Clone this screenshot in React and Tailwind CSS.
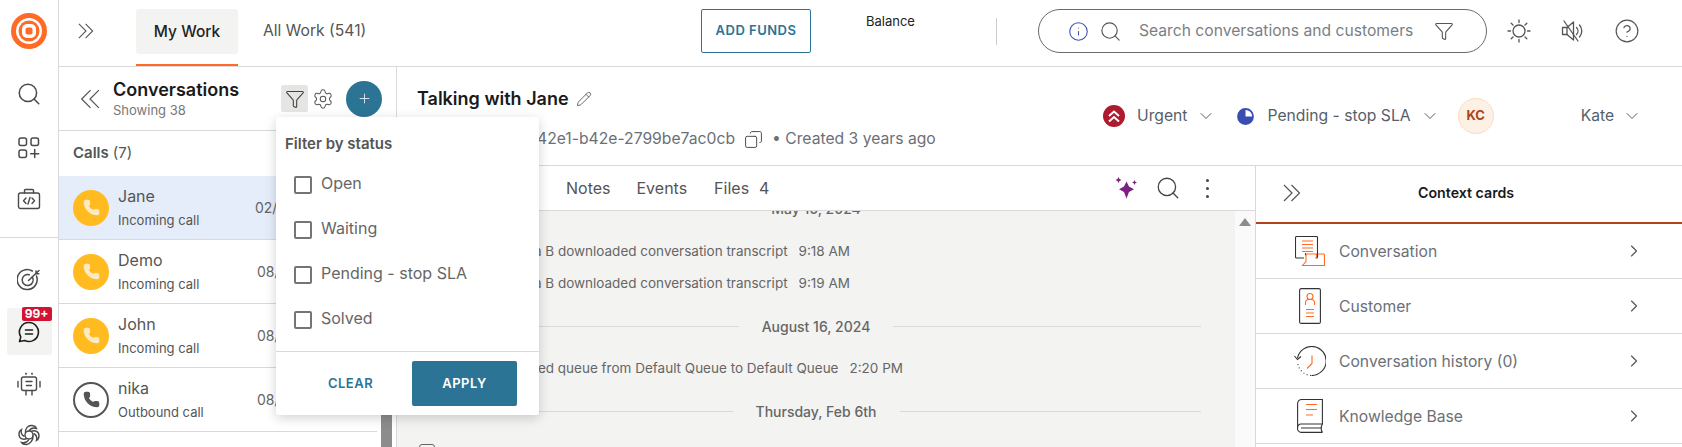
import { ChevronDown, ChevronRight, Search, Settings, Pencil, Copy, Info, CircleHelp, Phone, Funnel, Plus } from 'lucide-react';

const calls = [
    { name: 'Jane', sub: 'Incoming call', date: '02/06/2025', active: true },
    { name: 'Demo', sub: 'Incoming call', date: '08/16/2024' },
    { name: 'John', sub: 'Incoming call', date: '08/16/2024' },
    { name: 'nika', sub: 'Outbound call', date: '08/16/2024', outbound: true },
];

const statuses = ['Open', 'Waiting', 'Pending - stop SLA', 'Solved'];

function Logo() {
    return (
        <svg width="36" height="36" viewBox="0 0 36 36">
            <circle cx="18" cy="18" r="18" fill="#ff6a26" />
            <circle cx="18" cy="18" r="13" fill="#fff" />
            <circle cx="18" cy="18" r="10.5" fill="#ff6a26" />
            <rect x="11" y="11" width="14" height="14" rx="5" fill="#fff" />
            <rect x="14.5" y="14.5" width="7" height="7" rx="2" fill="#ff6a26" />
        </svg>
    );
}

function DoubleRight({ size }) {
    return (
        <svg width={size} height={size} viewBox="0 0 18 18" fill="none" stroke="#555555" strokeWidth="1.2">
            <path d="M1 1l8 8-8 8M8.5 1l8 8-8 8" />
        </svg>
    );
}

function DoubleLeft({ size }) {
    return (
        <svg width={size} height={size} viewBox="0 0 18 18" fill="none" stroke="#555555" strokeWidth="1.1">
            <path d="M9.5 1l-8 8 8 8M17 1l-8 8 8 8" />
        </svg>
    );
}

function SunIcon() {
    return (
        <svg width="24" height="24" viewBox="0 0 24 24" fill="none" stroke="#555555" strokeWidth="1.3" strokeLinecap="round">
            <circle cx="12" cy="12" r="6" />
            <path d="M12 1v2.5M12 20.5V23M1 12h2.5M20.5 12H23M4.2 4.2L6 6M18 18l1.8 1.8M4.2 19.8L6 18M18 6l1.8-1.8" />
        </svg>
    );
}

function MutedIcon() {
    return (
        <svg width="24" height="24" viewBox="0 0 24 24" fill="none" stroke="#555555" strokeWidth="1.3" strokeLinecap="round" strokeLinejoin="round">
            <path d="M1.5 8.5H6L12.5 3v18L6 15.5H1.5z" />
            <path d="M6 8.5v7M3 2l14 20" />
            <path d="M15.5 8.5a5 5 0 0 1 0 7M18.5 6a9 9 0 0 1 0 12" />
        </svg>
    );
}

function AppsIcon() {
    return (
        <svg width="22" height="22" viewBox="0 0 22 22" fill="none" stroke="#4a4a4a" strokeWidth="1.5">
            <rect x="1" y="1" width="7.5" height="7.5" rx="2" />
            <rect x="13" y="1" width="7.5" height="7.5" rx="2" />
            <rect x="1" y="13" width="7.5" height="7.5" rx="2" />
            <path d="M16.7 12.5v8M12.7 16.7h8" strokeLinecap="round" />
        </svg>
    );
}

function ToolboxIcon() {
    return (
        <svg width="24" height="22" viewBox="0 0 24 22" fill="none" stroke="#4a4a4a" strokeWidth="1.4" strokeLinecap="round" strokeLinejoin="round">
            <rect x="1.5" y="5" width="21" height="15.5" rx="2" />
            <path d="M7.5 5V2.5a1 1 0 0 1 1-1h7a1 1 0 0 1 1 1V5" />
            <path d="M9 10l-2.5 2.7L9 15.4M15 10l2.5 2.7-2.5 2.7M13 9.5l-2 6.5" />
        </svg>
    );
}

function TargetIcon() {
    return (
        <svg width="24" height="24" viewBox="0 0 24 24" fill="none" stroke="#4a4a4a" strokeWidth="1.5" strokeLinecap="round">
            <path d="M19.5 8a10 10 0 1 1-4.2-5" />
            <path d="M15.3 9a5.5 5.5 0 1 1-3-2.3" />
            <path d="M11.5 12.5L22 2.5M19 3v2.8h2.8" />
        </svg>
    );
}

function ChatIcon() {
    return (
        <svg width="22" height="22" viewBox="0 0 22 22" fill="none" stroke="#1f1f1f" strokeWidth="1.6" strokeLinecap="round" strokeLinejoin="round">
            <path d="M11 1.5a9.5 9.5 0 1 1-4.3 18L1.5 20.5l1.3-4.6A9.5 9.5 0 0 1 11 1.5z" />
            <path d="M7.5 9h7M7.5 13h7" />
        </svg>
    );
}

function BotIcon() {
    return (
        <svg width="24" height="24" viewBox="0 0 24 24" fill="none" stroke="#4a4a4a" strokeWidth="1.4" strokeLinecap="round" strokeLinejoin="round">
            <circle cx="9" cy="1.8" r="1" fill="#4a4a4a" stroke="none" />
            <circle cx="15" cy="1.8" r="1" fill="#4a4a4a" stroke="none" />
            <rect x="4.5" y="5" width="15" height="13.5" rx="2" />
            <path d="M9 9.5h6M9.5 13.5h5M1 9.5V15M23 9.5V15M9 18.5V23M15 18.5V23" />
        </svg>
    );
}

function SpiralIcon() {
    return (
        <svg width="22" height="22" viewBox="0 0 22 22" fill="none" stroke="#4a4a4a" strokeWidth="1.4">
            <circle cx="11" cy="11" r="4" />
            <path d="M7.5 9C7 4.5 10 1 14 1.5c2.5.3 4 1.5 4.5 3C15.5 3.5 12.5 4.5 11 7" />
            <path d="M13 7.5c4-1.800 8 0 8 4.200 0 2.300-1 4-2.500 4.800.8-3-.5-5.800-3-7" />
            <path d="M15 11.5c.5 4.300-2.500 8.500-6.500 9-2.200.2-4-.5-5-2 3 .7 6-.5 7.500-3" />
            <path d="M9 14.5c-4 1.800-8 0-8-4.200 0-2.300 1-4 2.500-4.800-.8 3 .5 5.800 3 7" />
        </svg>
    );
}

function Sparkle() {
    return (
        <svg width="22" height="22" viewBox="0 0 22 22" fill="#7b2180">
            <path d="M11.5 4.5l2.500 5 5 2.800-5 2.800-2.500 6.400-2.500-6.400-5-2.800 5-2.800z" />
            <path d="M3.5 0l1 2 2 1-2 1-1 2-1-2-2-1 2-1z" />
            <path d="M19.5 3l.8 1.700L22 5.500l-1.700.8-.8 1.700-.8-1.700L17 5.500l1.700-.8z" />
        </svg>
    );
}

function UrgentIcon() {
    return (
        <svg width="22" height="22" viewBox="0 0 22 22" className="shrink-0">
            <circle cx="11" cy="11" r="11" fill="#ae1a2e" />
            <path d="M6 11l5-4.500 5 4.500M6 16.500l5-4.500 5 4.500" fill="none" stroke="#fff" strokeWidth="2" />
        </svg>
    );
}

function PendingIcon() {
    return (
        <svg width="17" height="17" viewBox="0 0 17 17" className="block">
            <circle cx="8.5" cy="8.5" r="7.500" fill="none" stroke="#3a4db0" strokeWidth="1.8" />
            <path d="M8.5 8.5V1a7.500 7.500 0 1 0 7.500 7.500z" fill="#3a4db0" />
        </svg>
    );
}

function ConversationCard() {
    return (
        <svg width="30" height="30" viewBox="0 0 30 30" fill="none" strokeWidth="1.1">
            <path d="M9 22H1.500a1 1 0 0 1-1-1V1.500a1 1 0 0 1 1-1h20a1 1 0 0 1 1 1V21a1 1 0 0 1-1 1h-1" stroke="#333" />
            <path d="M7 5h11M7 8.500h11M7 12h11M7 15.500h11" stroke="#ff6a26" />
            <path d="M11 17.500h-.5v2" stroke="#333" />
            <path d="M11 21.500V18h10.500v4M23 18h5.500a1 1 0 0 1 1 1v10.500H7.500L11 25.500V21.500" stroke="#ff6a26" />
        </svg>
    );
}

function CustomerCard() {
    return (
        <svg width="22" height="36" viewBox="0 0 22 36" fill="none" strokeWidth="1.1">
            <rect x="0.6" y="0.6" width="20.8" height="34.8" rx="1.5" stroke="#333" />
            <circle cx="11" cy="8.5" r="3" stroke="#ff6a26" />
            <path d="M6.500 17v-2.500a3 3 0 0 1 3-3h3a3 3 0 0 1 3 3V17" stroke="#ff6a26" />
            <path d="M7 21.500h8M7 25h8M7 28.500h8" stroke="#ff6a26" />
        </svg>
    );
}

function HistoryCard() {
    return (
        <svg width="32" height="30" viewBox="0 0 32 30" fill="none" strokeWidth="1.1">
            <path d="M3.500 12A14.500 14.500 0 1 1 17.500 29.500" stroke="#333" />
            <path d="M17 29.500A14.500 14.500 0 0 1 3.500 16" stroke="#333" strokeDasharray="1 2.500" />
            <path d="M.5 10l3 3.500L7 10.500" stroke="#333" />
            <path d="M18 9.500v8l-5 5" stroke="#ff6a26" />
        </svg>
    );
}

function KnowledgeCard() {
    return (
        <svg width="26" height="34" viewBox="0 0 26 34" fill="none" strokeWidth="1.1">
            <path d="M.6 28V4.500a4 4 0 0 1 4-4H25.400V25H4a3.400 3.400 0 0 0-3.400 3.500A4 4 0 0 0 4 33.400h21.400" stroke="#333" />
            <path d="M25.400 25c-1.500 2.500-1.500 6 0 8.400M4 29h21" stroke="#333" />
            <path d="M9 5.500h11M9 10.500h11M9 16h7" stroke="#ff6a26" />
        </svg>
    );
}

function CallRow({ call }) {
    return (
        <div className={`flex h-[64px] shrink-0 items-center border-b border-[#d9d9d9] pl-[14px] ${call.active ? 'bg-[#e5edfb]' : ''}`}>
            {call.outbound ? (
                <div className="flex h-[36px] w-[36px] items-center justify-center rounded-full border-2 border-[#555555]">
                    <Phone size={17} fill="#555555" stroke="#555555" />
                </div>
            ) : (
                <div className="flex h-[36px] w-[36px] items-center justify-center rounded-full bg-[#ffbb1f]">
                    <Phone size={17} fill="#fdeac4" stroke="#fdeac4" />
                </div>
            )}
            <div className="ml-[9px] w-[139px]">
                <p className="text-[16px] leading-[20px] text-[#555555]">{call.name}</p>
                <p className="mt-[4px] text-[13px] leading-[20px] text-[#555555]">{call.sub}</p>
            </div>
            <span className={`whitespace-nowrap text-[14px] text-[#666666] ${call.active ? 'ml-[-2px]' : ''}`}>{call.date}</span>
        </div>
    );
}

function EventRow({ text, time, width }) {
    return (
        <div className={`flex h-[20px] shrink-0 items-center justify-end gap-[11px] whitespace-nowrap text-[13.5px] text-[#666666] ${width}`}>
            <span>{text}</span>
            <span>{time}</span>
        </div>
    );
}

function DateDivider({ label, className }) {
    return (
        <div className={`mx-[34px] flex h-[20px] shrink-0 items-center gap-[23px] ${className}`}>
            <div className="h-px flex-1 bg-[#d9d9d9]" />
            <span className="text-[14px] font-medium text-[#666666]">{label}</span>
            <div className="h-px flex-1 bg-[#d9d9d9]" />
        </div>
    );
}

function CardRow({ icon, label }) {
    return (
        <div className="flex h-[55px] items-center border-b border-[#d9d9d9]">
            <div className="ml-[36px] flex w-[36px] justify-center">{icon}</div>
            <span className="ml-[11px] pt-px text-[15.7px] text-[#6b7077]">{label}</span>
            <ChevronRight size={20} strokeWidth={1.4} className="ml-auto mr-[38px] text-[#555555]" />
        </div>
    );
}

export default function App() {
    return (
        <div className="flex h-[447px] w-[1682px] overflow-hidden bg-white font-['Inter',sans-serif]">
            {/* Left rail */}
            <div className="flex w-[59px] shrink-0 flex-col items-center border-r border-[#d9d9d9]">
                <div className="mt-[13px] pr-px"><Logo /></div>
                <Search size={26} strokeWidth={1.4} className="mt-[32px] text-[#4a4a4a]" />
                <div className="mt-[30px]"><AppsIcon /></div>
                <div className="mt-[29px]"><ToolboxIcon /></div>
                <div className="mt-[27px] h-px w-full bg-[#d9d9d9]" />
                <div className="mt-[30px]"><TargetIcon /></div>
                <div className="relative mt-[16px] flex h-[47px] w-[45px] items-center justify-center rounded-[3px] bg-[#f3f3f2]">
                    <ChatIcon />
                    <span className="absolute right-0 top-[-1px] rounded-[2px] bg-[#d31334] px-[3px] text-[12px] font-bold leading-[14px] text-white">99+</span>
                </div>
                <div className="mt-[17px]"><BotIcon /></div>
                <div className="mt-[28px]"><SpiralIcon /></div>
            </div>

            <div className="relative flex min-w-0 flex-1 flex-col">
                {/* Top bar */}
                <div className="flex h-[67px] shrink-0 items-center border-b border-[#d9d9d9]">
                    <div className="mb-[4px] ml-[19px]"><DoubleRight size={16} /></div>
                    <div className="ml-[42px] h-full w-[102px] border-b-2 border-[#ff6a26] pt-[9px]">
                        <div className="flex h-[45px] items-center justify-center rounded-[3px] bg-[#f3f3f2] text-[15.5px] font-medium text-[#222222]">My Work</div>
                    </div>
                    <div className="mb-[4px] ml-[25px] w-[438px] text-[15.7px] text-[#555555]">All Work (541)</div>
                    <button className="mb-[4px] h-[44px] w-[110px] rounded-[2px] border border-[#2c7495] text-[13px] font-semibold tracking-[0.5px] text-[#2c7495]">ADD FUNDS</button>
                    <div className="ml-[55px] h-full w-[130px] pt-[12px] text-[13px] leading-[18px] text-[#222222]">Balance</div>
                    <div className="mb-[4px] h-[27px] w-px bg-[#cccccc]" />
                    <div className="mb-[4px] ml-[41px] flex h-[44px] w-[449px] items-center rounded-full border border-[#6b6b6b] pl-[29px]">
                        <Info size={21} strokeWidth={1.2} className="text-[#3a4db0]" />
                        <Search size={23} strokeWidth={1.2} className="ml-[10px] text-[#555555]" />
                        <span className="ml-[17px] whitespace-nowrap text-[15.66px] text-[#7b7f85]">Search conversations and customers</span>
                        <Funnel size={20} strokeWidth={1.3} className="ml-[21px] text-[#555555]" />
                    </div>
                    <div className="mb-[4px] ml-[20px]"><SunIcon /></div>
                    <div className="mb-[4px] ml-[30px]"><MutedIcon /></div>
                    <CircleHelp size={26} strokeWidth={1.1} className="mb-[4px] ml-[29px] text-[#555555]" />
                </div>

                <div className="flex min-h-0 flex-1">
                    {/* Conversation list */}
                    <div className="flex w-[338px] shrink-0 flex-col border-r border-[#d9d9d9]">
                        <div className="flex h-[64px] shrink-0 items-center border-b border-[#d9d9d9]">
                            <div className="ml-[21px]"><DoubleLeft size={20} /></div>
                            <div className="ml-[13px] w-[168px] pt-px">
                                <p className="text-[18px] font-semibold leading-[22px] text-[#1a1a1a]">Conversations</p>
                                <p className="text-[13px] leading-[18px] text-[#777777]">Showing 38</p>
                            </div>
                            <div className="flex h-[27px] w-[27px] items-center justify-center rounded-[2px] bg-[#e5e5e3]">
                                <Funnel size={20} strokeWidth={1.3} className="text-[#444444]" />
                            </div>
                            <Settings size={22} strokeWidth={1.1} className="ml-[4px] text-[#555555]" />
                            <div className="ml-[12px] flex h-[36px] w-[36px] items-center justify-center rounded-full bg-[#2c7495]">
                                <Plus size={15} strokeWidth={1.5} className="text-[#dfeaf0]" />
                            </div>
                        </div>
                        <div className="flex min-h-0 flex-1">
                            <div className="w-[318px] shrink-0">
                                <div className="flex h-[45px] items-center pl-[14px] text-[15px] text-[#555555]">
                                    <span className="font-semibold">Calls</span>
                                    <span className="ml-[4px]">(7)</span>
                                </div>
                                {calls.map((call) => (
                                    <CallRow key={call.name} call={call} />
                                ))}
                            </div>
                            <div className="flex-1 pl-[4px]">
                                <div className="mt-[170px] h-[200px] w-[11px] bg-[#8c8c8c]" />
                            </div>
                        </div>
                    </div>

                    {/* Conversation detail */}
                    <div className="flex min-w-0 flex-1 flex-col">
                        <div className="flex h-[99px] shrink-0 border-b border-[#d9d9d9]">
                            <div className="w-[706px] shrink-0 pl-[20px]">
                                <div className="mt-[21px] flex items-center">
                                    <span className="text-[18px] font-semibold leading-[22px] text-[#1a1a1a]">Talking with Jane</span>
                                    <Pencil size={16} strokeWidth={1.2} className="ml-[7px] text-[#444444]" />
                                </div>
                                <div className="mt-[19px] flex items-center text-[15.7px] leading-[20px] text-[#6b7077]">
                                    <span className="w-[318px] whitespace-nowrap text-right">42e1-b42e-2799be7ac0cb</span>
                                    <Copy size={19} strokeWidth={1.2} className="ml-[9px] -scale-x-100 text-[#444444]" />
                                    <span className="ml-[9px] whitespace-nowrap">• Created 3 years ago</span>
                                </div>
                            </div>
                            <div className="mt-[38px] flex h-[22px] flex-1 items-center self-start text-[15.7px] text-[#555f6b]">
                                <UrgentIcon />
                                <span className="ml-[12px]">Urgent</span>
                                <ChevronDown size={20} strokeWidth={1.2} className="ml-[8px]" />
                                <span className="ml-[21px]"><PendingIcon /></span>
                                <span className="ml-[14px] whitespace-nowrap">Pending - stop SLA</span>
                                <ChevronDown size={20} strokeWidth={1.2} className="ml-[9px]" />
                                <div className="ml-[18px] flex h-[36px] w-[36px] shrink-0 items-center justify-center rounded-full border border-[#fbdcc0] bg-[#fdf0e4] text-[13px] font-bold text-[#b0431a]">KC</div>
                                <span className="ml-[87px]">Kate</span>
                                <ChevronDown size={20} strokeWidth={1.2} className="ml-[8px]" />
                            </div>
                        </div>
                        <div className="flex min-h-0 flex-1">
                            <div className="flex w-[858px] shrink-0 flex-col">
                                <div className="flex h-[45px] shrink-0 items-center border-b border-[#d9d9d9] pl-[169px] text-[16px] text-[#555555]">
                                    <span>Notes</span>
                                    <span className="ml-[26px]">Events</span>
                                    <span className="ml-[27px]">Files</span>
                                    <span className="ml-[10px]">4</span>
                                    <div className="ml-auto mr-[46px] flex items-center">
                                        <Sparkle />
                                        <Search size={26} strokeWidth={1.2} className="ml-[18px] text-[#444444]" />
                                        <div className="ml-[25px] flex flex-col gap-[5px]">
                                            <div className="h-[3px] w-[3px] rounded-full bg-[#444444]" />
                                            <div className="h-[3px] w-[3px] rounded-full bg-[#444444]" />
                                            <div className="h-[3px] w-[3px] rounded-full bg-[#444444]" />
                                        </div>
                                    </div>
                                </div>
                                <div className="flex min-h-0 flex-1">
                                    <div className="flex w-[838px] shrink-0 flex-col overflow-hidden bg-[#f3f3f2]">
                                        <DateDivider label="May 16, 2024" className="mt-[-13px]" />
                                        <div className="mt-[23px]"><EventRow text="Anna B downloaded conversation transcript" time="9:18 AM" width="w-[453px]" /></div>
                                        <div className="mt-[12px]"><EventRow text="Anna B downloaded conversation transcript" time="9:19 AM" width="w-[453px]" /></div>
                                        <DateDivider label="August 16, 2024" className="mt-[23px]" />
                                        <div className="mt-[22px]"><EventRow text="Anna B changed queue from Default Queue to Default Queue" time="2:20 PM" width="w-[506px]" /></div>
                                        <DateDivider label="Thursday, Feb 6th" className="mt-[23px]" />
                                        <div className="ml-[22px] mt-[23px] h-[16px] w-[16px] shrink-0 rounded-[3px] border border-[#666666]" />
                                    </div>
                                    <div className="flex flex-1 justify-center bg-[#fafafa] pt-[7px]">
                                        <div className="h-0 w-0 border-x-[6px] border-b-[8px] border-x-transparent border-b-[#8c8c8c]" />
                                    </div>
                                </div>
                            </div>

                            {/* Context cards */}
                            <div className="flex min-w-0 flex-1 flex-col border-l border-[#d9d9d9]">
                                <div className="flex h-[58px] shrink-0 items-center border-b-2 border-[#b0431a] pb-[2px]">
                                    <div className="ml-[27px]"><DoubleRight size={18} /></div>
                                    <span className="ml-[117px] text-[14.2px] font-semibold text-[#1a1a1a]">Context cards</span>
                                </div>
                                <CardRow icon={<ConversationCard />} label="Conversation" />
                                <CardRow icon={<CustomerCard />} label="Customer" />
                                <CardRow icon={<HistoryCard />} label="Conversation history (0)" />
                                <CardRow icon={<KnowledgeCard />} label="Knowledge Base" />
                            </div>
                        </div>
                    </div>
                </div>

                {/* Filter popover */}
                <div className="absolute left-[217px] top-[117px] flex h-[298px] w-[263px] flex-col rounded-[3px] bg-white shadow-[0_3px_12px_rgba(0,0,0,0.18)]">
                    <p className="pl-[9px] pt-[17px] text-[15px] font-semibold leading-[20px] text-[#555555]">Filter by status</p>
                    <div className="mt-[19px] flex flex-col gap-[25px] pl-[18px]">
                        {statuses.map((status) => (
                            <label key={status} className="flex h-[20px] items-center text-[16px] text-[#666666]">
                                <span className="mt-[4px] h-[18px] w-[18px] rounded-[2px] border-2 border-[#757575]" />
                                <span className="ml-[9px]">{status}</span>
                            </label>
                        ))}
                    </div>
                    <div className="mt-auto flex h-[64px] items-center border-t border-[#d9d9d9]">
                        <span className="w-[136px] pl-[13px] text-center text-[13px] font-semibold tracking-[0.5px] text-[#2c7495]">CLEAR</span>
                        <button className="h-[45px] w-[105px] rounded-[2px] bg-[#2c7495] text-[13px] font-semibold tracking-[0.5px] text-white">APPLY</button>
                    </div>
                </div>
            </div>
        </div>
    );
}
